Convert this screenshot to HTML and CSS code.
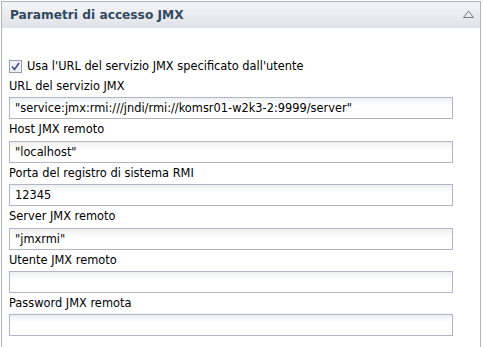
FILE: index.html
```html
<!DOCTYPE html>
<html>
<head>
<meta charset="utf-8">
<link rel="stylesheet" href="styles.css">
</head>
<body>
<div class="panel">
  <div class="panel-header">
    <span class="panel-title">Parametri di accesso JMX</span>
    <svg class="collapse" width="11" height="8" viewBox="0 0 11 8"><path d="M0.5 7.5 L5.5 1 L10.5 7.5 Z" fill="none" stroke="#7a7a7a" stroke-width="1"/></svg>
  </div>
  <div class="panel-body">
    <label class="check-row"><span class="checkbox"><svg width="9" height="9" viewBox="0 0 9 9"><path d="M1 4.5 L3.5 7.5 L8 1" fill="none" stroke="#3d4f8a" stroke-width="1.6"/></svg></span>Usa l'URL del servizio JMX specificato dall'utente</label>
    <div class="field"><div class="label">URL del servizio JMX</div><div class="input">"service:jmx:rmi:///jndi/rmi://komsr01-w2k3-2:9999/server"</div></div>
    <div class="field"><div class="label">Host JMX remoto</div><div class="input">"localhost"</div></div>
    <div class="field"><div class="label">Porta del registro di sistema RMI</div><div class="input">12345</div></div>
    <div class="field"><div class="label">Server JMX remoto</div><div class="input">"jmxrmi"</div></div>
    <div class="field"><div class="label">Utente JMX remoto</div><div class="input"></div></div>
    <div class="field"><div class="label">Password JMX remota</div><div class="input"></div></div>
  </div>
</div>
</body>
</html>
```
FILE: styles.css
```css
html, body { margin: 0; padding: 0; background: #fff; }
body { font-family: "DejaVu Sans", Verdana, sans-serif; font-size: 11.4px; color: #000; }
.panel {
  margin: 1px 0 0 1px;
  width: 480px;
  height: 360px;
  border: 1px solid #b3b3bf;
  box-sizing: border-box;
}
.panel-header {
  height: 26px;
  display: flex;
  align-items: center;
  justify-content: space-between;
  padding: 0 6px 0 8px;
  background: linear-gradient(#f4f5f7, #dfe2e7);
}
.panel-title { font-weight: bold; font-size: 12.2px; color: #33485e; }
.collapse { margin-top: -2px; }
.panel-body { padding: 30px 0 0 7px; }
.check-row { display: flex; align-items: center; height: 16px; margin-bottom: 3px; }
.checkbox {
  width: 11px; height: 11px; border: 1px solid #9a9aa8; margin-right: 5px;
  display: flex; align-items: center; justify-content: center; background: #eef0f6;
}
.field .label { height: 19px; line-height: 19px; margin-bottom: 1.4px; }
.input {
  width: 444px; height: 22px; box-sizing: border-box;
  border: 1px solid #b4b4c8;
  background: linear-gradient(#eef0ef, #ffffff 8px);
  padding: 0 5px; line-height: 20px; margin-bottom: 1px;
}
```
